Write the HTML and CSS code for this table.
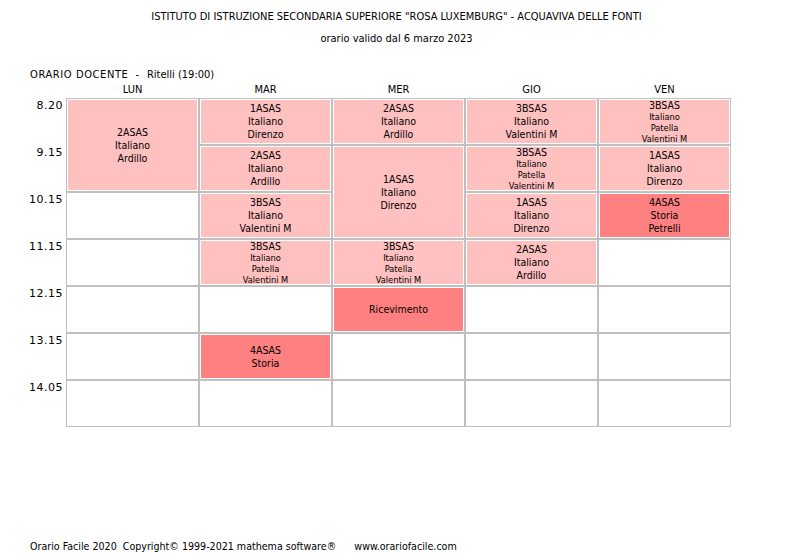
FILE: index.html
```html
<!DOCTYPE html>
<html lang="it">
<head>
<meta charset="utf-8">
<title>Orario docente</title>
<link rel="stylesheet" href="styles.css">
</head>
<body>
<div class="page">
  <div class="title">ISTITUTO DI ISTRUZIONE SECONDARIA SUPERIORE "ROSA LUXEMBURG" - ACQUAVIVA DELLE FONTI</div>
  <div class="subtitle">orario valido dal 6 marzo 2023</div>
  <div class="teacher"><span class="label">ORARIO DOCENTE</span><span class="dash">-</span><span class="name">Ritelli (19:00)</span></div>
  <div class="timetable">
    <div class="corner"></div>
    <div class="day">LUN</div>
    <div class="day">MAR</div>
    <div class="day">MER</div>
    <div class="day">GIO</div>
    <div class="day">VEN</div>

    <div class="time">8.20</div>
    <div class="cell span2"><div class="fill light"><span>2ASAS</span><span>Italiano</span><span>Ardillo</span></div></div>
    <div class="cell"><div class="fill light"><span>1ASAS</span><span>Italiano</span><span>Direnzo</span></div></div>
    <div class="cell"><div class="fill light"><span>2ASAS</span><span>Italiano</span><span>Ardillo</span></div></div>
    <div class="cell"><div class="fill light"><span>3BSAS</span><span>Italiano</span><span>Valentini M</span></div></div>
    <div class="cell"><div class="fill light small"><span>3BSAS</span><span>Italiano</span><span>Patella</span><span>Valentini M</span></div></div>

    <div class="time">9.15</div>
    <div class="cell"><div class="fill light"><span>2ASAS</span><span>Italiano</span><span>Ardillo</span></div></div>
    <div class="cell span2"><div class="fill light"><span>1ASAS</span><span>Italiano</span><span>Direnzo</span></div></div>
    <div class="cell"><div class="fill light small"><span>3BSAS</span><span>Italiano</span><span>Patella</span><span>Valentini M</span></div></div>
    <div class="cell"><div class="fill light"><span>1ASAS</span><span>Italiano</span><span>Direnzo</span></div></div>

    <div class="time">10.15</div>
    <div class="cell"></div>
    <div class="cell"><div class="fill light"><span>3BSAS</span><span>Italiano</span><span>Valentini M</span></div></div>
    <div class="cell"><div class="fill light"><span>1ASAS</span><span>Italiano</span><span>Direnzo</span></div></div>
    <div class="cell"><div class="fill dark"><span>4ASAS</span><span>Storia</span><span>Petrelli</span></div></div>

    <div class="time">11.15</div>
    <div class="cell"></div>
    <div class="cell"><div class="fill light small"><span>3BSAS</span><span>Italiano</span><span>Patella</span><span>Valentini M</span></div></div>
    <div class="cell"><div class="fill light small"><span>3BSAS</span><span>Italiano</span><span>Patella</span><span>Valentini M</span></div></div>
    <div class="cell"><div class="fill light"><span>2ASAS</span><span>Italiano</span><span>Ardillo</span></div></div>
    <div class="cell"></div>

    <div class="time">12.15</div>
    <div class="cell"></div>
    <div class="cell"></div>
    <div class="cell"><div class="fill dark"><span>Ricevimento</span></div></div>
    <div class="cell"></div>
    <div class="cell"></div>

    <div class="time">13.15</div>
    <div class="cell"></div>
    <div class="cell"><div class="fill dark"><span>4ASAS</span><span>Storia</span></div></div>
    <div class="cell"></div>
    <div class="cell"></div>
    <div class="cell"></div>

    <div class="time">14.05</div>
    <div class="cell"></div>
    <div class="cell"></div>
    <div class="cell"></div>
    <div class="cell"></div>
    <div class="cell"></div>
  </div>
  <div class="footer">Orario Facile 2020&nbsp; Copyright© 1999-2021 mathema software®&nbsp;&nbsp;&nbsp;&nbsp;&nbsp; www.orariofacile.com</div>
</div>
</body>
</html>
```

FILE: styles.css
```css
html, body {
  margin: 0;
  padding: 0;
  background: #ffffff;
}

.page {
  width: 793px;
  height: 559px;
  color: #000000;
  font-family: "DejaVu Sans Condensed", "DejaVu Sans", sans-serif;
  font-size: 10.5px;
  line-height: 13px;
}

.title,
.subtitle,
.teacher,
.day {
  font-size: 11px;
}

.title {
  padding-top: 10px;
  text-align: center;
}

.subtitle {
  padding-top: 9px;
  text-align: center;
}

.teacher {
  padding-top: 23px;
  padding-left: 30px;
  display: flex;
  white-space: pre;
}

.teacher .label {
  letter-spacing: 0.6px;
}

.teacher .dash {
  margin-left: 7px;
}

.teacher .name {
  margin-left: 8px;
}

.timetable {
  display: grid;
  grid-template-columns: 66px repeat(5, 133px);
  grid-template-rows: 17px repeat(7, 47px);
}

.day {
  text-align: center;
  padding-top: 2px;
}

.time {
  font-family: "DejaVu Sans", sans-serif;
  font-size: 11px;
  text-align: right;
  padding-right: 3px;
  padding-top: 1px;
  letter-spacing: 0.5px;
}

.cell {
  border: 1px solid #c0c0c0;
  padding: 1px;
  background: #ffffff;
}

.span2 {
  grid-row: span 2;
}

.fill {
  height: 100%;
  display: flex;
  flex-direction: column;
  align-items: center;
  justify-content: center;
  text-align: center;
}

.light {
  background: #ffc0c0;
}

.dark {
  background: #ff8080;
}

.small {
  line-height: 11px;
  font-size: 9.2px;
}

.small span:first-child {
  font-size: 10.5px;
}

.footer {
  padding-top: 113px;
  padding-left: 30px;
  font-size: 10.6px;
  white-space: pre;
}
```
